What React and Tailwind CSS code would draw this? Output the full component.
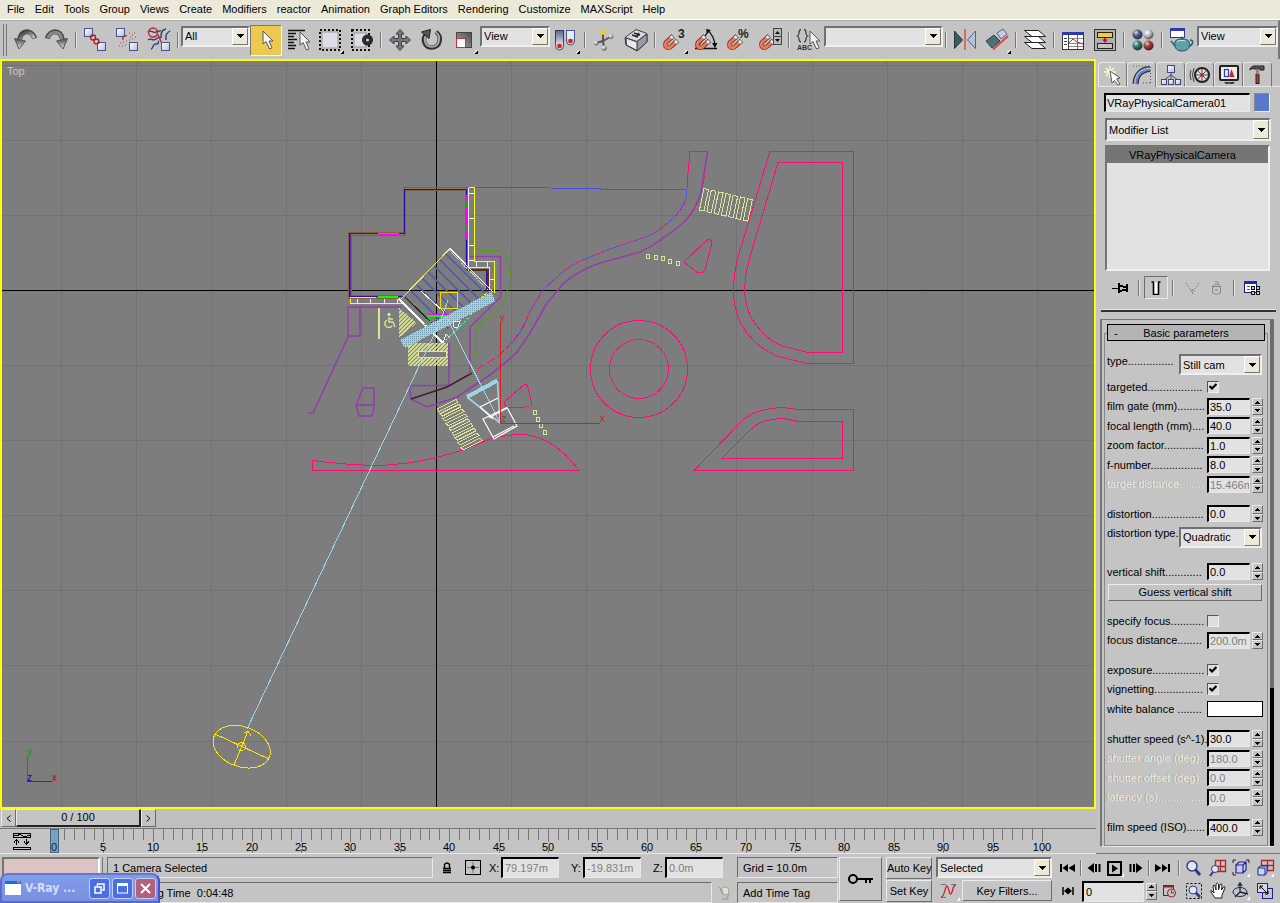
import React from "react";

const SUNK = "border border-t-[#6c6c6c] border-l-[#6c6c6c] border-r-[#e8e8e8] border-b-[#e8e8e8]";
const RAISED = "border border-t-[#ebebeb] border-l-[#ebebeb] border-r-[#6c6c6c] border-b-[#6c6c6c]";
const FIELD = "border-t-2 border-l-2 border-r border-b border-t-black border-l-black border-r-[#e8e8e8] border-b-[#e8e8e8] bg-[#e2e2e2]";

function Select({ label, id, options, className }) {
  return (
    <span className={`relative block ${className}`}>
      <select
        id={id}
        aria-label={label}
        className="block h-full w-full appearance-none border-2 border-t-[#6e7074] border-l-[#6e7074] border-r-[#efefef] border-b-[#efefef] bg-[#e2e2e2] pr-4 pl-[2px] text-black outline-none"
      >
        {options.map((o) => (
          <option key={o}>{o}</option>
        ))}
      </select>
      <span className="pointer-events-none absolute top-[2px] right-[2px] bottom-[2px] flex w-4 items-center justify-center border border-t-white border-l-white border-r-[#77756a] border-b-[#77756a] bg-[#ece9d8]">
        <svg width="7" height="4" viewBox="0 0 7 4" shapeRendering="crispEdges">
          <path d="M0 0H7L3.5 4Z" fill="#000" />
        </svg>
      </span>
    </span>
  );
}

function Sep() {
  return (
    <span className="flex h-4 w-[6px] shrink-0 justify-center">
      <span className="w-px bg-[#777]" />
      <span className="w-px bg-[#e4e4e4]" />
    </span>
  );
}

function Tool({ label, active, flyout, children }) {
  return (
    <button
      aria-label={label}
      className={`relative flex h-[31px] w-8 shrink-0 items-center justify-center ${active ? "border border-t-[#777] border-l-[#777] border-r-white border-b-white bg-[#edc952]" : ""}`}
    >
      <svg className="overflow-visible" width="24" height="24" viewBox="0 0 24 24" fill="none">
        {children}
      </svg>
      {flyout && (
        <svg className="absolute right-[2px] bottom-[2px]" width="4" height="4" viewBox="0 0 4 4" shapeRendering="crispEdges">
          <path d="M4 0V4H0Z" fill="#000" />
          <path d="M0 3L3 0H2L0 2Z" fill="#fff" />
        </svg>
      )}
    </button>
  );
}

const Cube = ({ x, y, s = 8 }) => (
  <g>
    <rect x={x} y={y} width={s} height={s} fill="url(#cube)" stroke="#4a5590" />
  </g>
);

const Cursor = ({ x, y }) => (
  <path transform={`translate(${x} ${y})`} d="M0 0L0 13L3 10.5L6.5 18L9 16.8L6 10H10Z" fill="#f4f4f4" stroke="#555" />
);

const Magnet = () => (
  <g>
    <path d="M15 10L9 15.500C5 19 1.500 14 4.500 11L11 5" stroke="#8a3020" strokeWidth="4.600" transform="translate(0 3)" />
    <path d="M15 10L9 15.500C5 19 1.500 14 4.500 11L11 5" stroke="#e8785c" strokeWidth="3" transform="translate(0 3)" />
    <path d="M13.200 14.800L15.500 12.500M8.800 10.200L11 8" stroke="#555" strokeWidth="4.600" />
    <path d="M13.200 14.800L15 13M8.800 10.200L10.600 8.400" stroke="#eee" strokeWidth="3.200" />
  </g>
);

function Defs() {
  return (
    <svg width="0" height="0" className="absolute" aria-hidden="true">
      <defs>
        <linearGradient id="cube" x1="0" y1="0" x2="1" y2="1">
          <stop offset="0" stopColor="#fff" />
          <stop offset="1" stopColor="#b8bcd8" />
        </linearGradient>
        <linearGradient id="steel" x1="0" y1="0" x2="1" y2="1">
          <stop offset="0" stopColor="#333" />
          <stop offset="0.500" stopColor="#888" />
          <stop offset="1" stopColor="#ddd" />
        </linearGradient>
        <linearGradient id="steelBox" x1="0" y1="1" x2="1" y2="0">
          <stop offset="0" stopColor="#aaa" />
          <stop offset="1" stopColor="#4a4c54" />
        </linearGradient>
        <linearGradient id="steelDown" x1="0" y1="0" x2="0" y2="1">
          <stop offset="0" stopColor="#444" />
          <stop offset="0.400" stopColor="#888" />
          <stop offset="1" stopColor="#e8e8e8" />
        </linearGradient>
        <linearGradient id="pane" x1="0" y1="0" x2="0" y2="1">
          <stop offset="0" stopColor="#5a6690" />
          <stop offset="1" stopColor="#d8dcf0" />
        </linearGradient>
        <radialGradient id="ballBlue" cx="0.350" cy="0.300" r="0.700">
          <stop offset="0" stopColor="#dfe4f8" />
          <stop offset="0.400" stopColor="#5a688f" />
          <stop offset="1" stopColor="#222a44" />
        </radialGradient>
        <radialGradient id="ballGray" cx="0.350" cy="0.300" r="0.700">
          <stop offset="0" stopColor="#fff" />
          <stop offset="0.500" stopColor="#bbb" />
          <stop offset="1" stopColor="#555" />
        </radialGradient>
        <radialGradient id="ballTeal" cx="0.350" cy="0.300" r="0.700">
          <stop offset="0" stopColor="#cfeee8" />
          <stop offset="0.400" stopColor="#3d8076" />
          <stop offset="1" stopColor="#123a34" />
        </radialGradient>
        <radialGradient id="ballRed" cx="0.350" cy="0.300" r="0.700">
          <stop offset="0" stopColor="#f4c8c0" />
          <stop offset="0.400" stopColor="#a84840" />
          <stop offset="1" stopColor="#4c1814" />
        </radialGradient>
      </defs>
    </svg>
  );
}

const MENUS = ["File", "Edit", "Tools", "Group", "Views", "Create", "Modifiers", "reactor", "Animation", "Graph Editors", "Rendering", "Customize", "MAXScript", "Help"];

function MenuBar() {
  return (
    <nav className="flex h-5 shrink-0 items-center gap-[10px] border-b border-white bg-[#ece9d8] pb-[2px] pl-[7px] text-[11px]">
      {MENUS.map((m) => (
        <button key={m} className="whitespace-nowrap">
          {m}
        </button>
      ))}
    </nav>
  );
}

function Toolbar() {
  return (
    <div className="flex h-[39px] shrink-0 items-center overflow-hidden border-t border-t-[#aaa] border-r-2 border-r-[#777] bg-[#c4c4c4]">
      <span className="flex h-8 w-[9px] shrink-0 gap-[2px] pl-[3px]">
        <span className="w-px bg-[#777]" />
        <span className="w-px bg-[#777]" />
      </span>
      <Tool label="Undo">
        <path d="M21.500 10.500C20 2.500 8 0 6.500 12" stroke="#444" strokeWidth="5" />
        <path d="M21 10C19 3 8.500 1 7 12" stroke="url(#steel)" strokeWidth="3.200" />
        <path d="M1.500 10.500L12.500 13L6 21Z" fill="url(#steelDown)" stroke="#555" />
      </Tool>
      <Tool label="Redo">
        <path d="M2.500 10.500C4 2.500 16 0 17.500 12" stroke="#444" strokeWidth="5" />
        <path d="M3 10C5 3 15.500 1 17 12" stroke="#888" strokeWidth="3.200" />
        <path d="M22.500 10.500L11.500 13L18 21Z" fill="url(#steelDown)" stroke="#555" />
      </Tool>
      <Sep />
      <Tool label="Select and link">
        <Cube x={1.500} y={0.500} />
        <Cube x={14.500} y={14.500} />
        <circle cx="10" cy="9.500" r="2.500" stroke="#b02020" strokeWidth="1.300" />
        <circle cx="13.500" cy="13.500" r="2.500" stroke="#b02020" strokeWidth="1.300" />
      </Tool>
      <Tool label="Unlink selection">
        <Cube x={1.500} y={0.500} />
        <Cube x={14.500} y={14.500} />
        <path d="M8 12C7 9 9 7 12 8" stroke="#b02020" strokeWidth="1.300" />
        <path d="M14 5h1M17 7h1M15 9h1M19 5h1M20 9h1M17 11h1M14 12h1M5 15h1M8 14h1M10 17h1M7 18h1M4 18h1M11 13h1" stroke="#c04040" strokeWidth="1.200" />
      </Tool>
      <Tool label="Bind to space warp">
        <path d="M1 4c3-3 5 2 8 0s5 0 4-2M1 12c3-3 5 2 8-1s3 0 5-2M4 21c2 0 2-6 5-5s2-3 3-3M14 10c0-4 0-8 5-9M19 12c0-4-1-6 4-9" stroke="#333a70" strokeWidth="1.400" />
        <circle cx="6" cy="4.500" r="4.500" stroke="#c02828" strokeWidth="1.400" />
        <path d="M10 6c3 3 3 5 4 8" stroke="#c02828" strokeWidth="1.400" />
        <Cube x={14.500} y={14.500} />
      </Tool>
      <Sep />
      <Select label="Selection filter" options={["All"]} className="mb-2 h-[21px] w-[69px] shrink-0" />
      <Tool label="Select object" active>
        <Cursor x={9} y={3} />
      </Tool>
      <Tool label="Select by name">
        <path d="M2 2.500H19M2 5.500H10M2 8.500H8M2 11.500H11M2 14.500H8M2 17.500H10M2 20.500H9" stroke="#111" strokeWidth="1.500" />
        <Cursor x={14} y={4} />
      </Tool>
      <Tool label="Rectangular region" flyout>
        <rect x="2" y="2" width="20" height="20" stroke="#111" strokeWidth="2" strokeDasharray="2 2" />
        <rect x="4" y="4" width="16" height="16" fill="#dcdde6" stroke="#999" />
      </Tool>
      <Tool label="Window crossing">
        <rect x="2" y="2" width="17" height="20" stroke="#111" strokeWidth="2" strokeDasharray="2 2" />
        <rect x="4" y="5" width="12" height="14" fill="#dcdde6" stroke="#999" />
        <circle cx="17.500" cy="12" r="5.500" fill="#2a2a2a" />
        <circle cx="17.500" cy="12" r="1.500" fill="#ccc" />
      </Tool>
      <Sep />
      <Tool label="Select and move">
        <path d="M12 1.500L16 6H13.500V10.500H18V8L22.500 12L18 16V13.500H13.500V18H16L12 22.500L8 18H10.500V13.500H6V16L1.500 12L6 8V10.500H10.500V6H8Z" fill="#777" stroke="#3c3f48" />
      </Tool>
      <Tool label="Select and rotate">
        <path d="M16 4C22 8 21 19 12 19.500C4 19.500 2 11 6 6.500" stroke="#333" strokeWidth="4.500" />
        <path d="M16 4.500C21 8 20 18.500 12 18.800C5 18.800 3 11 6.500 7" stroke="#aaa" strokeWidth="2" />
        <path d="M1.500 4L10.500 1.500L9 10.500Z" fill="#555" stroke="#222" />
      </Tool>
      <Tool label="Select and scale" flyout>
        <rect x="4.500" y="4.500" width="15" height="15" fill="url(#steelBox)" stroke="#444" />
        <rect x="4.500" y="10.500" width="9" height="9" fill="#fff" stroke="#d03030" />
      </Tool>
      <Select label="Reference coordinate system" options={["View"]} className="mb-2 h-[21px] w-[70px] shrink-0" />
      <Tool label="Use pivot point center" flyout>
        <rect x="1.500" y="2.500" width="8" height="14" fill="url(#pane)" stroke="#333a60" />
        <path d="M1.500 15v3a4 4 0 0 0 8 0v-3" fill="#c8cce0" stroke="#555" />
        <rect x="12.500" y="2.500" width="8" height="9" fill="#e8eaf8" stroke="#4a58a0" />
        <path d="M12.500 11v2a4 4 0 0 0 8 0v-2" fill="#c8cce0" stroke="#555" />
        <circle cx="5.500" cy="18" r="2.300" fill="#d82020" />
        <circle cx="16.500" cy="13" r="2.300" fill="#d82020" />
      </Tool>
      <Sep />
      <Tool label="Select and manipulate">
        <path d="M11 4V13L4 15M11 13L20 8M11 13L12 20" stroke="#555" strokeWidth="2" />
        <circle cx="11" cy="4" r="2.800" fill="#e8d030" />
        <circle cx="4" cy="15" r="2.400" fill="url(#ballGray)" />
        <circle cx="19" cy="8.500" r="2.400" fill="url(#ballGray)" />
        <circle cx="12" cy="20" r="2.600" fill="url(#ballGray)" />
      </Tool>
      <Tool label="Keyboard shortcut override">
        <path d="M1 10L12 2L23 6V14L13 23L2 17Z" fill="#666" stroke="#333" />
        <path d="M1 9.500L12 1.500L23 5.500L13 13.500Z" fill="#d8d8e4" stroke="#444" />
        <path d="M13 13.500L23 6V14L13 23Z" fill="#999aa8" stroke="#444" />
        <path d="M2 10L13 14V22.500L2.500 17Z" fill="#e8e8f0" stroke="#444" />
        <path d="M8 7L14 9M10 5L16 7M12 9L15 5" stroke="#222" strokeWidth="1.500" />
      </Tool>
      <Sep />
      <Tool label="Snaps toggle" flyout>
        <Magnet />
        <text x="16" y="10" fontSize="12" fontWeight="bold" fill="#222" fontFamily="Liberation Sans, sans-serif">3</text>
      </Tool>
      <Tool label="Angle snap">
        <path d="M1 20.500H23M3 20L15 2M13 2C18 5 21 12 21 19" stroke="#111" strokeWidth="1.300" />
        <path d="M12 1L17 2L13 6ZM18 15H23.500L21 20Z" fill="#111" />
        <Magnet />
      </Tool>
      <Tool label="Percent snap">
        <Magnet />
        <text x="12" y="10" fontSize="12" fontWeight="bold" fill="#222" fontFamily="Liberation Sans, sans-serif">%</text>
      </Tool>
      <Tool label="Spinner snap">
        <Magnet />
        <rect x="15.500" y="0.500" width="8" height="8" fill="#b8b8b8" stroke="#444" />
        <rect x="15.500" y="8.500" width="8" height="8" fill="#b8b8b8" stroke="#444" />
        <path d="M17 6H22L19.500 3ZM17 11H22L19.500 14Z" fill="#111" />
      </Tool>
      <Sep />
      <Tool label="Named selection sets">
        <path d="M5 1.500C2 1.500 4 7 1.500 8C4 9 2 14 5 14M8 1.500C11 1.500 9 7 11.500 8C9 9 11 14 8 14" stroke="#444" strokeWidth="1.300" />
        <text x="1" y="22" fontSize="7" fontWeight="bold" fill="#333" fontFamily="Liberation Sans, sans-serif">ABC</text>
        <Cursor x={14} y={3} />
      </Tool>
      <Select label="Named selection" options={[""]} className="mb-2 h-[21px] w-[119px] shrink-0" />
      <Sep />
      <Tool label="Mirror">
        <path d="M1.500 3L9.500 12L1.500 20.500Z" fill="#3c5c64" stroke="#24383c" />
        <path d="M22.500 3L14.500 12L22.500 20.500Z" fill="#b8c0dc" stroke="#5a6080" />
        <path d="M12 1V22" stroke="#e04848" strokeWidth="1.400" />
      </Tool>
      <Tool label="Align" flyout>
        <path d="M1 13L9 7L15 13L7 20Z" fill="#4c7078" stroke="#2a4046" />
        <path d="M12 5L18 1L22 6L16 11Z" fill="#c4cce8" stroke="#5a6080" />
        <path d="M8 21.500L23 8" stroke="#e04040" strokeWidth="1.800" />
      </Tool>
      <Sep />
      <Tool label="Layer manager">
        <path d="M1.500 14.500H15.500L22.500 20.500H9Z" fill="#fff" stroke="#222" />
        <path d="M1.500 8.500H15.500L22.500 14.500H9Z" fill="#fff" stroke="#222" />
        <path d="M1.500 2.500H15.500L22.500 8.500H9Z" fill="#fff" stroke="#222" />
      </Tool>
      <Sep />
      <Tool label="Curve editor">
        <rect x="1.500" y="4.500" width="21" height="17" fill="#fff" stroke="#333" />
        <rect x="1" y="4" width="22" height="3" fill="#3038b0" />
        <path d="M7.500 7V21M3 10.500H6M3 13.500H6M3 16.500H6" stroke="#444" />
        <path d="M8 10.500H22M8 15.500H22M8 18.500H22" stroke="#888" />
        <path d="M8 15L12 11L16 14L22 16" stroke="#d02828" />
        <path d="M16.500 7V21" stroke="#28a028" />
      </Tool>
      <Tool label="Schematic view">
        <rect x="1.500" y="1.500" width="21" height="21" fill="#b0b0b0" stroke="#333" />
        <rect x="4.500" y="4.500" width="15" height="5" fill="#f0d030" stroke="#222" />
        <rect x="4.500" y="15.500" width="15" height="5" fill="#c4c4c4" stroke="#222" />
        <path d="M12 10V14" stroke="#c02020" strokeWidth="2" />
        <path d="M9 11.500H15L12 15Z" fill="#c02020" />
      </Tool>
      <Sep />
      <Tool label="Material editor">
        <circle cx="6.500" cy="6.500" r="5" fill="url(#ballBlue)" />
        <circle cx="17.500" cy="6.500" r="5" fill="url(#ballGray)" />
        <circle cx="6.500" cy="17.500" r="5" fill="url(#ballTeal)" />
        <circle cx="17.500" cy="17.500" r="5" fill="url(#ballRed)" />
      </Tool>
      <Sep />
      <Tool label="Render scene">
        <rect x="1.500" y="0.500" width="14" height="9" fill="#fff" stroke="#333a80" />
        <rect x="1" y="0" width="15" height="3" fill="#3038b0" />
        <path d="M2 13L7 19M21 12C26 12 23 18 20 18" stroke="#2c6068" strokeWidth="1.600" />
        <path d="M6 14C6 10 20 10 20 14C22 19 19 23 13 23C7 23 5 19 6 14Z" fill="#5fa0a8" stroke="#24545c" />
        <path d="M8 14C10 12 14 12 16 13" stroke="#cfeef0" />
        <circle cx="13" cy="10" r="1.500" fill="#2c6068" />
      </Tool>
      <Select label="Render type" options={["View"]} className="mb-2 h-[21px] min-w-20 flex-1 shrink-0" />
    </div>
  );
}

const V_LINES = [61, 136, 211, 286, 361, 511, 586, 661, 736, 812, 887, 962, 1037];
const H_LINES = [65, 140, 215, 365, 440, 515, 590, 665, 741];
const PINK = "#ff0a78";
const PURPLE = "#9140ab";
const LIME = "#dce596";
const SKY = "#9fd3ea";

function Scene() {
  return (
    <svg className="block h-full w-full" viewBox="2 61 1092 746" preserveAspectRatio="xMinYMin slice" fill="none" shapeRendering="crispEdges">
      <defs>
        <pattern id="dots" width="2" height="2" patternUnits="userSpaceOnUse">
          <rect width="2" height="2" fill="#9fd3ea" />
          <rect width="1" height="1" fill="#6f99aa" />
        </pattern>
        <pattern id="hatch" width="4" height="4" patternUnits="userSpaceOnUse">
          <path d="M0 4L4 0M-1 1L1 -1M3 5L5 3" stroke={LIME} strokeWidth="1.800" shapeRendering="auto" />
        </pattern>
        <pattern id="roof" width="12" height="12" patternUnits="userSpaceOnUse">
          <path d="M0 0L12 12M-1 11L1 13M11 -1L13 1" stroke="#4a5db8" strokeWidth="1.800" shapeRendering="auto" />
        </pattern>
      </defs>
      <g stroke="#727272">
        {V_LINES.map((x) => (
          <path key={x} d={`M${x}.5 61V807`} />
        ))}
        {H_LINES.map((y) => (
          <path key={y} d={`M2 ${y}.5H1094`} />
        ))}
        <path d="M2 118.500H922.500V807" stroke="#787878" />
      </g>
      <path d="M436.500 61V807M2 290.500H1094" stroke="#000" />

      <g stroke={PINK}>
        <path d="M770 151.500H853.500V363.500H807L777 356Q760 348 753 340Q742 328 738 317Q733.500 304 733.500 290Q734 272 738 257Z" />
        <path d="M778 162.500H842.500V352.500H808L782 346Q770 341 763 333Q752 322 748 310Q744.500 300 744.500 290Q745 275 749 260Z" />
        <path d="M694 470.500L743 420Q750 414 760 411Q772 407.500 783 407.500L798 409.500H853.500V470.500Z" />
        <path d="M721.500 458.500L748 432Q755 425 763 421.500Q773 418.500 783 418.500L798 421.500H842.500V458.500Z" />
        <circle cx="639" cy="369" r="48.500" />
        <circle cx="639" cy="369" r="29.500" />
        <path d="M312.500 470.500V460.500Q345 465 380 465.500Q408 464 430 459Q450 454 463 450L490 439Q505 435 523 434Q537 436 550 443Q566 453 579 470.500Z" />
        <path d="M684 262L706 241Q711 237 712 243L705 270Q700 276 694 270Z" />
        <path d="M505 401L524 385Q527 383 528 388L532 404Q531 408 508 408Q504 406 505 401Z" />
        <path d="M708 151.500H690L688 173L687 188" />
      </g>

      <path d="M474 187.500H501L598 188.500H600V189.500H687" stroke="#4a50e0" />
      <path d="M707.500 152L703 180Q702 192 697 203Q692 214 683 223Q673 232 663 238Q653 246 640 252L600 263Q588 267 580 272Q565 280 558 290L547 303L530 333L517 352Q503 366 487 377L457 397L427 407L411 399L409 385.500H449V343" stroke={PURPLE} strokeWidth="1.600" shapeRendering="auto" />
      <path d="M705.500 162Q704 190 697 203Q690 216 683 223" stroke={PINK} strokeDasharray="2 5" />
      <path d="M687 188Q687 198 684 203Q678 216 663 227Q653 235 643 238L610 249L580 261Q565 269 557 277L543 290L530 311Q524 330 512 343" stroke="#5558dd" />
      <path d="M685 203Q678 216 663 227Q653 235 643 238L610 249L580 261Q565 269 557 277L543 290L530 311" stroke={PINK} strokeDasharray="2 5" />
      <path d="M530 311Q522 335 497 357L472 372" stroke={PINK} strokeDasharray="9 3" />
      <path d="M472 373L447 387L411 399" stroke="#4a1a38" strokeWidth="1.600" shapeRendering="auto" />

      <g stroke={LIME}>
        {[0, 1, 2, 3, 4, 5, 6].map((i) => (
          <path key={i} d="M704 188.500L708.500 189.500L704 211L699.500 210Z" transform={`translate(${i * 7.3} ${i * 1.700})`} />
        ))}
        {[0, 1, 2, 3, 4, 5, 6, 7, 8].map((i) => (
          <path key={i} d="M437 409L456 399.500L458 402L439 411.500Z" transform={`translate(${i * 3} ${i * 4.800})`} />
        ))}
        {[[648, 256], [656, 257], [663, 258], [670, 261], [678, 263], [535, 412], [538, 419], [541, 425], [545, 432]].map(([x, y]) => (
          <rect key={`${x}-${y}`} x={x - 1.500} y={y - 1.500} width="3" height="4" />
        ))}
      </g>

      <g stroke={PURPLE} strokeWidth="1.600" shapeRendering="auto">
        <path d="M347 307H402M348 307V336H360V307M348 337L313 413H308" />
        <path d="M363 388H374V408L372 416H359L356 405ZM356 405H374" />
        <path d="M468 256.500H500.500V297L470 327V374" />
      </g>
      <path d="M362 405H368" stroke={PINK} />
      <path d="M476 189L473 210V237Q474 250 482 250.500H497Q507 252 509 262Q512 277 508 290Q505 306 495 313L485 320Q474 328 475 340V350L472 373" stroke="#559c14" />

      <path d="M379 308V339" stroke={LIME} strokeWidth="2" />
      <path d="M398.500 307.500V338L417 323Z" fill="url(#hatch)" />
      <rect x="408" y="343" width="40" height="23" fill="url(#hatch)" />
      <rect x="418.500" y="351.500" width="28" height="6" fill="#7d7d7d" stroke={LIME} />
      <g stroke={LIME} shapeRendering="auto" strokeWidth="1.400">
        <path d="M389 317V322H393L395 327M389 319H393" />
        <path d="M387 320A4 4 0 1 0 392 326" />
        <circle cx="389" cy="314.500" r="1" fill={LIME} />
      </g>

      <path d="M467.500 270V187.500H403.500V232.500H348.500V298.500H402" stroke="#8a6038" />
      <path d="M465.500 270V190.500H405.500V235.500H351.500V295.500H402" stroke="#8a6038" />
      <path d="M466.500 270V189.500H404.500V233.500H349.500V296.500H404" stroke="#2a0fa5" />
      <path d="M350.500 234V296" stroke="#5a2cb0" />
      <path d="M466.500 195V240M378 234.500H399" stroke="#f0f" strokeWidth="1" />
      <path d="M466.500 202V208M466.500 225V229" stroke="#0c0" />
      <path d="M378 296.500H398" stroke="#0f0" strokeWidth="2" />
      <path d="M378 233.500H399" stroke="#2c2" />
      <path d="M350 297.500H376M350.500 299V303.500H402" stroke="#ff0" />
      <path d="M357.500 299V303M370.500 299V303M384.500 299V303M397.500 299V303" stroke="#eee" />
      <path d="M468.500 187.500H474.500V261.500H494.500V293" stroke="#ff0" />
      <path d="M468.500 188V268" stroke="#eee" />
      <path d="M469 193.500H474M469 218.500H474M469 245.500H474M469 260.500H474M489 279.500H494M476.500 262V267M487.500 262V267" stroke="#eee" />
      <path d="M467 269.500H487.500V290" stroke="#5b3010" strokeWidth="2" />
      <path d="M469 267.500H489.500V290" stroke="#ff0" />
      <path d="M486.500 271V290" stroke="#2a0fa5" />

      <path d="M450 249L487 291L443 333L404 299Z" fill="url(#roof)" />
      <path d="M401 299L450 248.500" stroke="#f2e878" />
      <path d="M450 248.500L493 292" stroke="#fff" />
      <path d="M449 250L490 292" stroke="#ccc" strokeDasharray="2 1" />
      <path d="M405 297L437 328" stroke="#222" />
      <path d="M408 297L440 328" stroke="#2c2" strokeDasharray="5 4" />
      <path d="M399 299L443 343" stroke="#fff" strokeWidth="2" />
      <path d="M421 291L444 312" stroke="#fff" />
      <path d="M487 293L460 315" stroke="#ff0" strokeDasharray="3 2" />
      <path d="M427 314.500H455" stroke="#f0f" />
      <path d="M427 316H449" stroke="#0f0" strokeWidth="2" />
      <path d="M400 340L491.500 292L495 301.500L405 348Z" fill="url(#dots)" />
      <path d="M424 325L446 315" stroke="#2c2" strokeDasharray="3 3" />
      <path d="M470 317L443 343" stroke="#2cc89a" />
      <path d="M472 314L446 340" stroke="#f2d838" strokeDasharray="2 3" />
      <path d="M443 343L446 334L450 338M453 322L460 321L458 327L454 327Z" stroke="#eee" />
      <rect x="440.500" y="292.500" width="17" height="16" stroke="#ffd800" />

      <path d="M448 300L440 322L247 729" stroke={SKY} />
      <path d="M447 318L500 423" stroke={SKY} />
      <path d="M467 397L497.500 380.500" stroke={SKY} strokeWidth="4" />
      <path d="M467 397L500 423L497.500 381" stroke={SKY} strokeWidth="1.600" shapeRendering="auto" />
      <g stroke="#fff" strokeWidth="1.200" shapeRendering="auto">
        <path d="M480 407L498 398M480 407L493 419M489 418L507 408" />
        <path d="M483 419L507 407.500L517 426L494 439ZM493 437L514 426" />
      </g>
      <path d="M500.500 323V423.500H600" stroke="#dc1c1c" />

      <g stroke="#ffe600">
        <ellipse cx="241.700" cy="746.700" rx="29.500" ry="20" transform="rotate(20 241.700 746.700)" />
        <path d="M215 734L269 759M248 731L234 765M244 733L248 731L251 736" />
        <circle cx="241.500" cy="746.500" r="4" />
      </g>
      <path d="M27.500 756V781" stroke="#00a000" />
      <path d="M27 781.500H52" stroke="#c80000" />
      <g fontFamily="Liberation Sans, sans-serif" fontSize="10" shapeRendering="auto">
        <text x="7" y="75" fill="#c8c8c8" fontSize="11">Top</text>
        <text x="500" y="321" fill="#dc1c1c">y</text>
        <text x="600" y="422" fill="#dc1c1c">x</text>
        <text x="501" y="422" fill="#555">z</text>
        <text x="27" y="755" fill="#00a000">y</text>
        <text x="27" y="781" fill="#0000d0">z</text>
        <text x="52" y="781" fill="#c80000">x</text>
      </g>
    </svg>
  );
}

function TimeSlider() {
  return (
    <div className="flex h-[19px] shrink-0 items-stretch bg-[#bfbfbf] pr-px pb-px pl-px text-[11px]">
      <button aria-label="Previous frame" className={`flex w-[15px] items-center justify-center bg-[#c4c4c4] ${RAISED}`}>
        <svg width="5" height="7" viewBox="0 0 5 7" fill="none" stroke="#000"><path d="M4.500 0.500L1 3.500L4.500 6.500" /></svg>
      </button>
      <button className="w-[125px] border-t border-r-2 border-b-2 border-l border-t-[#ebebeb] border-r-[#222] border-b-[#222] border-l-[#ebebeb] bg-[#c4c4c4] leading-none">
        0 / 100
      </button>
      <button aria-label="Next frame" className={`flex w-[15px] items-center justify-center bg-[#c4c4c4] ${RAISED}`}>
        <svg width="5" height="7" viewBox="0 0 5 7" fill="none" stroke="#000"><path d="M0.500 0.500L4 3.500L0.500 6.500" /></svg>
      </button>
    </div>
  );
}

function TrackBar() {
  const ticks = Array.from({ length: 101 }, (_, i) => i);
  return (
    <div className="h-[26px] shrink-0 overflow-hidden border-t border-b border-t-[#777] border-b-[#e8e8e8] bg-[#c4c4c4]">
      <svg className="block h-6 w-full" viewBox="0 829 1096 24" preserveAspectRatio="xMinYMin slice" fill="none">
        <g shapeRendering="crispEdges" stroke="#000">
          <path d="M13.500 833.500H30.500V837.500H13.500ZM14 835.500H17L20 834.500L24 836.500L30 835.500M13.500 847.500H30.500V849.500H13.500Z" />
          <path d="M16.500 845V840M14 842.500L16.500 839.500L19 842.500M26.500 839V844M24 841.500L26.500 844.500L29 841.500" />
          {ticks.map((i) => {
            const x = Math.round(54 + i * 9.880) + 0.5;
            return <path key={i} stroke="#777" d={i % 5 ? `M${x} 829V840` : `M${x} 829V842M${x} 850V853`} />;
          })}
        </g>
        <rect x="50.500" y="829.500" width="8" height="23" fill="#6f9dc2" fillOpacity="0.850" stroke="#44617c" />
        <g fontFamily="Liberation Sans, sans-serif" fontSize="11" fill="#000" textAnchor="middle">
          {ticks.filter((i) => i % 5 === 0).map((i) => (
            <text key={i} x={Math.round(54 + i * 9.880)} y="851" fill={i ? "#000" : "#123"}>{i}</text>
          ))}
        </g>
      </svg>
    </div>
  );
}

const TABS = [
  ["Create", <g key="a"><path d="M8 2V14M2 8H14M4 4L12 12M12 4L4 12" stroke="#fffbd0" strokeWidth="1.300" /><path d="M8 7L18 14L14.500 15L18 20L16 21L12.500 16.500L10 19Z" fill="#fff" stroke="#555" /></g>],
  ["Modify", <g key="b"><path d="M4.500 20C5 11 10 5.500 19 5" stroke="#1c2440" strokeWidth="6" /><path d="M4.500 20C5 11 10 5.500 19 5" stroke="#6c7cae" strokeWidth="4" /><path d="M3.800 20C4.300 10.500 9.500 4.700 19 4.300" stroke="#c4ccea" strokeWidth="1" /><path d="M2 2H19M19.500 3V20M12 19H19" stroke="#555" strokeDasharray="1 2" /></g>],
  ["Hierarchy", <g key="c"><path d="M11 8V15M4 16L11 11L18 16" stroke="#444a70" /><rect x="7.500" y="1.500" width="7" height="7" fill="url(#cube)" stroke="#444a80" /><rect x="1.500" y="15.500" width="5" height="5" fill="url(#cube)" stroke="#444a80" /><rect x="8.500" y="15.500" width="5" height="5" fill="url(#cube)" stroke="#444a80" /><rect x="15.500" y="15.500" width="5" height="5" fill="url(#cube)" stroke="#444a80" /></g>],
  ["Motion", <g key="d"><path d="M2 6Q0 11 2 16M5 4Q2 11 5 18" stroke="#444" /><circle cx="13" cy="11" r="7" fill="#ddd" stroke="#222" strokeWidth="2" /><path d="M13 5V17M7 11H19M9 7L17 15M17 7L9 15" stroke="#555" /><circle cx="13" cy="11" r="1.800" fill="#d02020" /></g>],
  ["Display", <g key="e"><rect x="2" y="2" width="18" height="14" rx="1" fill="#eee" stroke="#222" strokeWidth="2" /><rect x="6.500" y="5.500" width="4" height="7" stroke="#3040b0" strokeWidth="1.200" /><path d="M11 13L13.500 5L16.500 13Z" fill="#d02828" /><path d="M6 18H17L15 20H8Z" fill="#333" /><path d="M9 19H13" stroke="#28a028" /></g>],
  ["Utilities", <g key="f"><path d="M3 5C5 1 8 2 13 2H17V6H13V5H8L5 4.500L3 6Z" fill="#555" stroke="#222" /><path d="M10.500 5V11" stroke="#888" strokeWidth="3" /><path d="M10.500 10V20" stroke="#222" strokeWidth="4" /><path d="M10.500 10V19" stroke="#b03828" strokeWidth="2" /></g>],
];

function Spinner({ label }) {
  return (
    <span className="flex h-[17px] w-[11px] shrink-0 flex-col">
      <button aria-label={`${label} up`} className={`flex flex-1 items-center justify-center ${RAISED}`}>
        <svg width="5" height="3" viewBox="0 0 5 3" shapeRendering="crispEdges"><path d="M0 3H5L2.500 0Z" /></svg>
      </button>
      <button aria-label={`${label} down`} className={`flex flex-1 items-center justify-center ${RAISED}`}>
        <svg width="5" height="3" viewBox="0 0 5 3" shapeRendering="crispEdges"><path d="M0 0H5L2.500 3Z" /></svg>
      </button>
    </span>
  );
}

function Param({ id, label, value, checked, options, disabled, color }) {
  return (
    <div className="flex items-center">
      <label
        htmlFor={id}
        className={`-ml-px shrink-0 whitespace-nowrap ${options ? "w-[72px]" : "w-[100px]"} ${disabled ? "text-[#efede2] [text-shadow:-1px_0_#a09f98]" : ""}`}
      >
        {label}
      </label>
      {options && <Select id={id} options={options} className="mt-2 h-[21px] w-[83px] shrink-0" />}
      {checked !== undefined && (
        <span className="relative block h-3 w-3">
          <input id={id} type="checkbox" defaultChecked={checked} className="peer block h-3 w-3 appearance-none border border-t-[#555] border-l-[#555] border-r-[#eee] border-b-[#eee] bg-[#dedede]" />
          <svg className="pointer-events-none absolute top-[2px] left-[2px] hidden peer-checked:block" width="8" height="8" viewBox="0 0 8 8" fill="none">
            <path d="M0.500 3L3 5.500L7.500 1" stroke="#000" strokeWidth="2.200" />
          </svg>
        </span>
      )}
      {color && <input id={id} type="text" readOnly className="h-4 w-14 border border-black bg-white" />}
      {value && (
        <>
          <input id={id} defaultValue={value} className={`mr-[2px] h-[17px] w-[43px] rounded-none pl-px outline-none ${FIELD} ${disabled || value === "200.0m" ? "text-[#808080]" : "text-black"}`} />
          <Spinner label={id} />
        </>
      )}
    </div>
  );
}

function CommandPanel() {
  return (
    <aside className="flex w-[184px] shrink-0 flex-col border-b border-b-[#777] bg-[#c4c4c4] pt-[3px] text-[11px]">
      <div className="flex h-[25px] shrink-0 pl-[2px]">
        {TABS.map(([name, art], i) => (
          <button
            key={name}
            aria-label={name}
            className={`flex w-[29px] items-center justify-center rounded-t border-t border-r border-l border-t-[#e8e8e8] border-l-[#e8e8e8] border-r-[#777] ${i === 1 ? "" : "border-b border-b-[#e8e8e8]"}`}
          >
            <svg width="22" height="22" viewBox="0 0 22 22" fill="none">{art}</svg>
          </button>
        ))}
        <span className="flex-1 border-b border-b-[#e8e8e8]" />
      </div>
      <div className="mt-[6px] mr-[10px] ml-2 flex h-[19px] shrink-0 gap-1">
        <input aria-label="Object name" defaultValue="VRayPhysicalCamera01" className={`min-w-0 flex-1 rounded-none pl-px outline-none ${FIELD}`} />
        <button aria-label="Object color" className="w-4 border border-t-[#888] border-l-[#888] border-r-[#eee] border-b-[#eee] bg-[#5878cc]" />
      </div>
      <Select label="Modifier List" options={["Modifier List"]} className="mt-[6px] mr-[9px] ml-[9px] h-[23px] shrink-0" />
      <ul className="mt-[4px] mr-[10px] ml-[9px] h-[126px] shrink-0 border-2 border-t-[#77756a] border-l-[#77756a] border-r-[#f4f2e8] border-b-[#f4f2e8] bg-[#e2e2e2]">
        <li className="h-4 bg-[#757575] pl-[22px] leading-4">VRayPhysicalCamera</li>
      </ul>
      <div className="mt-[5px] flex h-[23px] shrink-0 items-center pl-3">
        <button aria-label="Pin stack" className="flex w-[28px] pl-1">
          <svg width="17" height="12" viewBox="0 0 17 12" fill="none" shapeRendering="crispEdges" stroke="#000">
            <path d="M0 6H6" />
            <path d="M7 1V11" strokeWidth="2" />
            <path d="M8 3.500H10L11 4.500H14M8 8.500H10L11 7.500H14" strokeWidth="2" />
            <path d="M15 2V10" strokeWidth="2" />
          </svg>
        </button>
        <Sep />
        <button aria-label="Show end result" className={`mx-[2px] flex h-[23px] w-6 items-center justify-center ${SUNK}`}>
          <svg width="10" height="14" viewBox="0 0 10 14"><path d="M2.500 1.500V13.500H7.500V1.500" fill="#fff" stroke="#000" strokeWidth="1.600" /><path d="M0.500 1H3M7 1H9.500" stroke="#000" strokeWidth="1.600" /></svg>
        </button>
        <Sep />
        <button aria-label="Make unique" className="ml-1 flex w-6 justify-center">
          <svg width="15" height="14" viewBox="0 0 15 14" fill="none" stroke="#888" strokeDasharray="2 1"><path d="M1 2L6 9M14 2L9 9M5 10H10M7.500 8V13" /></svg>
        </button>
        <button aria-label="Remove modifier" className="flex w-6 justify-center">
          <svg width="11" height="14" viewBox="0 0 11 14" fill="none" stroke="#888"><path d="M1.500 6V12Q5.500 15 9.500 12V6M1 5.500H10M2 5C3 3 8 3 9 5M4 1H7V3M4 9H7" /></svg>
        </button>
        <span className="w-[3px]" />
        <Sep />
        <button aria-label="Configure modifier sets" className="ml-[7px] flex">
          <svg width="16" height="14" viewBox="0 0 16 14" fill="none" shapeRendering="crispEdges"><rect x="0.500" y="0.500" width="12" height="11" fill="#fff" stroke="#111a80" /><path d="M0 1.500H13" stroke="#1830b0" strokeWidth="3" /><path d="M3 5.500H6M3 8.500H6" stroke="#555" /><rect x="7.500" y="5.500" width="3" height="3" fill="#ccc" stroke="#111" /><rect x="12.500" y="5.500" width="3" height="3" fill="#ccc" stroke="#111" /><rect x="7.500" y="10.500" width="3" height="3" fill="#ccc" stroke="#111" /><rect x="12.500" y="10.500" width="3" height="3" fill="#ccc" stroke="#111" /></svg>
        </button>
      </div>
      <div className="mt-[10px] mr-1 ml-[5px] h-[3px] shrink-0 border-t border-b-2 border-t-[#e8e8e8] border-b-[#333]" />
      <div className="mt-[7px] mr-[6px] mb-[6px] ml-1 flex min-h-0 flex-1 border-t border-b border-l-2 border-t-[#777] border-b-[#e8e8e8] border-l-[#777] pl-[2px]">
        <section className="relative flex min-w-0 flex-1 flex-col px-1 pt-[4px]">
          <span className="pointer-events-none absolute inset-x-0 top-[13px] bottom-0 border border-[#888]" />
          <button className="relative -mx-px flex h-[17px] shrink-0 items-center border border-black bg-[#b4b4b4]">
            <span className="absolute left-[6px]">-</span>
            <span className="flex-1">Basic parameters</span>
          </button>
          <div className="relative -mr-1 mt-[5px] flex shrink-0 flex-col gap-[10px]">
            <div className="-mb-[5px] grid h-[26px] items-start">
              <Param id="type" label="type..............." options={["Still cam"]} />
            </div>
            <div className="grid h-[117px] auto-rows-fr">
              <Param id="targeted" label="targeted.................." checked />
              <Param id="film-gate" label="film gate (mm)........." value="35.0" />
              <Param id="focal-length" label="focal length (mm)...." value="40.0" />
              <Param id="zoom-factor" label="zoom factor............." value="1.0" />
              <Param id="f-number" label="f-number................." value="8.0" />
              <Param id="target-distance" label="target distance........" value="15.466m" disabled />
            </div>
            <div className="mb-[9px] grid h-[39px] auto-rows-fr">
              <Param id="distortion" label="distortion................." value="0.0" />
              <Param id="distortion-type" label="distortion type." options={["Quadratic"]} />
            </div>
            <div className="grid h-[39px] auto-rows-fr">
              <Param id="vertical-shift" label="vertical shift............" value="0.0" />
              <button className={`mr-[6px] mt-[2px] leading-none ${RAISED}`}>Guess vertical shift</button>
            </div>
            <div className="grid h-[39px] auto-rows-fr">
              <Param id="specify-focus" label="specify focus..........." checked={false} />
              <Param id="focus-distance" label="focus distance........" value="200.0m" />
            </div>
            <div className="grid h-[59px] auto-rows-fr">
              <Param id="exposure" label="exposure................." checked />
              <Param id="vignetting" label="vignetting................" checked />
              <Param id="white-balance" label="white balance ........" color />
            </div>
            <div className="grid h-[78px] auto-rows-fr">
              <Param id="shutter-speed" label="shutter speed (s^-1)." value="30.0" />
              <Param id="shutter-angle" label="shutter angle (deg).." value="180.0" disabled />
              <Param id="shutter-offset" label="shutter offset (deg).." value="0.0" disabled />
              <Param id="latency" label="latency (s)..............." value="0.0" disabled />
            </div>
            <div className="grid h-5">
              <Param id="film-speed" label="film speed (ISO)......" value="400.0" />
            </div>
          </div>
        </section>
        <div className="ml-[2px] flex w-[4px] flex-col">
          <span className="flex-[7] bg-[#6c6c6c]" />
          <span className="flex-[3] bg-black" />
        </div>
      </div>
    </aside>
  );
}

function Coord({ axis, value }) {
  return (
    <div className="flex items-center">
      <label htmlFor={`coord-${axis}`} className="w-3 whitespace-nowrap">{axis}:</label>
      <input id={`coord-${axis}`} defaultValue={value} className={`h-[21px] w-[58px] rounded-none pl-[2px] text-[#808080] outline-none ${FIELD}`} />
    </div>
  );
}

function Small({ label, w = 24, h = 22, className = "", children }) {
  return (
    <button aria-label={label} className={`flex shrink-0 items-center justify-center ${className}`}>
      <svg width={w} height={h} viewBox={`0 0 ${w} ${h}`} fill="none">{children}</svg>
    </button>
  );
}

function StatusBar() {
  return (
    <footer className="relative flex h-[49px] shrink-0 overflow-hidden bg-[#c4c4c4] pt-[3px] pr-[3px] text-[11px]">
      <div className="mr-[4px] flex w-[103px] shrink-0 border-r border-r-[#777] pl-[2px]">
        <input aria-label="Listener" className="h-[22px] w-[98px] border-2 border-t-[#77756a] border-l-[#77756a] border-r-white border-b-white bg-[#dcc4c6]" />
      </div>
      <div className="flex min-w-0 flex-1 flex-col gap-1">
        <div className="flex h-[21px] shrink-0 items-center">
          <output className={`flex h-full min-w-0 flex-1 items-center pl-[5px] ${SUNK}`}>1 Camera Selected</output>
          <Small label="Selection lock" w={14} h={16} className="mx-[5px] w-[18px]">
            <path d="M4.500 8V4.500Q7 1.500 9.500 4.500V8" stroke="#000" strokeWidth="1.400" />
            <path d="M3 8.500H11M3 10.500H11M3 12.500H11" stroke="#000" strokeWidth="1.300" />
          </Small>
          <Small label="Absolute mode" w={16} h={16} className="mr-2 ml-1">
            <rect x="0.500" y="0.500" width="15" height="14" stroke="#000" />
            <path d="M8 2V13M2 7.500H14" stroke="#777" />
            <circle cx="8" cy="7.500" r="2" fill="#000" />
          </Small>
          <div className="flex gap-3">
            <Coord axis="X" value="79.197m" />
            <Coord axis="Y" value="-19.831m" />
            <Coord axis="Z" value="0.0m" />
          </div>
          <output className={`ml-[14px] flex h-full w-[101px] shrink-0 items-center pl-[5px] ${SUNK}`}>Grid = 10.0m</output>
        </div>
        <div className="flex h-[21px] shrink-0 items-center">
          <output className={`flex h-full min-w-0 flex-1 items-center whitespace-pre pl-[5px] ${SUNK}`}>Rendering Time  0:04:48</output>
          <Small label="Communication center" w={16} h={16} className="w-[25px]">
            <circle cx="8" cy="6" r="4" fill="#e2dfd4" stroke="#a8a69c" />
            <path d="M2 2L6 7M12 9L10 13M5 14H12M3 4L7 9" stroke="#98968c" />
          </Small>
          <button className={`h-full w-[101px] shrink-0 pl-[5px] text-left ${SUNK}`}>Add Time Tag</button>
        </div>
      </div>
      <button aria-label="Set keys" className={`ml-px flex h-[44px] w-[43px] shrink-0 items-center justify-center ${RAISED}`}>
        <svg width="26" height="12" viewBox="0 0 26 12" fill="none" stroke="#000" strokeWidth="2"><circle cx="5" cy="6" r="4" /><path d="M9 6H25M18 6V10M22 6V10" /></svg>
      </button>
      <div className="mx-1 flex w-[46px] shrink-0 flex-col gap-px">
        <button className={`h-[22px] whitespace-nowrap ${RAISED}`}>Auto Key</button>
        <button className={`h-[22px] ${RAISED}`}>Set Key</button>
      </div>
      <div className="flex w-[116px] shrink-0 flex-col gap-[2px]">
        <Select label="Key selection" options={["Selected"]} className="h-[21px]" />
        <div className="flex">
          <Small label="Default tangents" w={22} h={20} className="w-[26px]">
            <path d="M3 3.500H8M13 3.500H18M3 16.500H8" stroke="#6a74a0" />
            <path d="M3 16C7 16 7 4 9 5C11 6 11 14 13 13C15 12 14 4 18 4" stroke="#d02020" strokeWidth="1.300" />
            <path d="M19 20H22V16Z" fill="#fff" />
          </Small>
          <button className={`h-[21px] flex-1 ${RAISED}`}>Key Filters...</button>
        </div>
      </div>
      <div className="ml-[6px] flex w-[124px] shrink-0 flex-col gap-[1px]">
        <div className="flex h-[22px] items-center">
          <Small label="Go to start" w={16} h={10} className="w-5"><path d="M1 1V9" stroke="#000" strokeWidth="2" /><path d="M8 1V9L2.500 5ZM15 1V9L8.500 5Z" fill="#000" /></Small>
          <Sep />
          <Small label="Previous" w={14} h={10} className="w-5"><path d="M7 0V10L0.500 5Z" fill="#000" /><path d="M9 1V9M12.500 1V9" stroke="#000" strokeWidth="2" /></Small>
          <Small label="Play" w={18} h={17} className="mx-[2px]"><rect x="2" y="2" width="13" height="13" stroke="#000" strokeWidth="2" /><path d="M6 4.500V12.500L12 8.500Z" fill="#000" /><path d="M15 17H18V13Z" fill="#fff" /></Small>
          <Small label="Next" w={14} h={10} className="w-5"><path d="M7 0V10L13.500 5Z" fill="#000" /><path d="M1.500 1V9M5 1V9" stroke="#000" strokeWidth="2" /></Small>
          <Sep />
          <Small label="Go to end" w={16} h={10} className="w-5"><path d="M15 1V9" stroke="#000" strokeWidth="2" /><path d="M1 1V9L7.500 5ZM8 1V9L13.500 5Z" fill="#000" /></Small>
          <span className="flex-1" />
          <Sep />
        </div>
        <div className="flex h-[22px] items-center">
          <Small label="Key mode" w={12} h={8} className="w-5"><path d="M1 0V8M11 0V8" stroke="#000" strokeWidth="1.500" /><path d="M6 0.500V7.500L2 4ZM6 0.500V7.500L10 4Z" fill="#000" /></Small>
          <input aria-label="Current frame" defaultValue="0" className={`mr-[2px] ml-[4px] h-[21px] w-[62px] rounded-none pl-[2px] outline-none ${FIELD}`} />
          <Spinner label="Current frame" />
          <Small label="Time configuration" w={14} h={14} className="w-6"><rect x="1.500" y="1.500" width="10" height="10" stroke="#333" /><path d="M1 2.500H12" stroke="#902020" strokeWidth="2" /><circle cx="9.500" cy="9" r="4" fill="#c4c4c4" stroke="#902020" /><path d="M9.500 6.500V9H12" stroke="#902020" /></Small>
        </div>
      </div>
      <div className="grid w-[95px] shrink-0 grid-cols-4 grid-rows-[22px_22px] gap-y-px">
        <Small label="Zoom" w={20} h={20}>
          <path d="M10 10L16 17" stroke="#2a3a80" strokeWidth="3" />
          <circle cx="8" cy="8" r="5" fill="#dfe8f4" stroke="#333a80" strokeWidth="1.400" />
        </Small>
        <Small label="Zoom all" w={20} h={20}>
          <path d="M7.500 2.500H17.500V13.500H7.500ZM12.500 2V14M7 8.500H18" stroke="#b02828" strokeWidth="1.300" />
          <circle cx="7" cy="11" r="3.500" fill="#dfe8f4" stroke="#333a80" /><path d="M5 14L2 18" stroke="#2a3a80" strokeWidth="2" />
        </Small>
        <Small label="Zoom extents" w={20} h={20}>
          <path d="M5 7L8 4H15V12L12 15H5ZM5 7H12V15M12 7L15 4" fill="#c8ccec" stroke="#1c2490" strokeWidth="1.200" />
          <path d="M2 5V2H5M15 2H18V5M2 14V17H5" stroke="#222" /><path d="M16 19H19V15Z" fill="#fff" />
        </Small>
        <Small label="Zoom extents all" w={20} h={20}>
          <path d="M6.500 2.500H18.500V12.500H6.500ZM12.500 2V12M7 7.500H18" stroke="#b02828" strokeWidth="1.300" />
          <path d="M3 10L5 8H12V14L10 17H3ZM3 10H10V17" fill="#d0d4f0" stroke="#1c2490" /><path d="M16 19H19V15Z" fill="#fff" />
        </Small>
        <Small label="Region zoom" w={20} h={20}>
          <rect x="2.500" y="2.500" width="15" height="15" stroke="#000" strokeDasharray="2 2" />
          <circle cx="9" cy="9" r="4" fill="#dfe8f4" stroke="#333a80" /><path d="M12 12L16 16" stroke="#2a3a80" strokeWidth="2.500" />
        </Small>
        <Small label="Pan" w={20} h={20}>
          <path d="M7 17L3 11Q2 9 4 10L6 12L5 5Q6 3 7 5L8 9V3Q9.500 1 10.500 3V9L12 3.500Q13.500 2 14 4L13.500 9L15.500 6Q17.500 5 17 7L14 14V17Z" fill="#fff" stroke="#222" />
        </Small>
        <Small label="Orbit" w={20} h={20}>
          <ellipse cx="9" cy="11" rx="7" ry="4.500" stroke="#1c2440" /><path d="M9 11V2M7 5L9 2L11 5M9 11L4 16M9 11L17 13" stroke="#1c2440" strokeWidth="1.300" /><path d="M16 19H19V15Z" fill="#fff" />
        </Small>
        <Small label="Maximize viewport" w={20} h={20}>
          <rect x="7.500" y="7.500" width="10" height="10" stroke="#1c2490" /><rect x="2.500" y="2.500" width="10" height="9" fill="#d8d8d8" stroke="#1c2490" /><path d="M5 5L13 13M5 8V5H8M13 10V13H10" stroke="#000" />
        </Small>
      </div>
    </footer>
  );
}

function MinimizedWindow() {
  const btn = "flex h-[21px] w-[21px] items-center justify-center rounded-[3px] border border-[#c3cff5]";
  return (
    <div className="absolute bottom-0 left-0 flex h-[30px] w-[160px] items-center gap-[2px] rounded-t-lg border-2 border-t-[#6377cf] border-r-[#4a4fc4] border-b-[#5a68cc] border-l-[#5a6cd0] bg-gradient-to-b from-[#7f9cea] to-[#7b90e0] pl-[3px]">
      <svg width="16" height="14" viewBox="0 0 16 14"><rect width="16" height="14" fill="#fff" /><rect width="16" height="3" fill="#1a6fe0" /><rect x="12" y="0" width="3" height="2" fill="#e87040" /></svg>
      <span className="min-w-0 flex-1 whitespace-pre pl-[2px] font-['DejaVu_Sans_Condensed','DejaVu_Sans','Liberation_Sans',sans-serif] text-[12px] font-bold text-[#d5defa]">V-Ray ...</span>
      <button aria-label="Restore" className={`${btn} bg-[#4a6fe4]`}>
        <svg width="11" height="11" viewBox="0 0 11 11" fill="none" stroke="#fff"><path d="M3.500 3V1H10V7H8" strokeWidth="1.500" /><rect x="1" y="4" width="6" height="6" strokeWidth="1.500" /></svg>
      </button>
      <button aria-label="Maximize" className={`${btn} bg-[#4a6fe4]`}>
        <svg width="11" height="11" viewBox="0 0 11 11" fill="none" stroke="#fff"><rect x="0.500" y="1" width="10" height="9" /><path d="M0 1.500H11" strokeWidth="3" /></svg>
      </button>
      <button aria-label="Close" className={`${btn} mr-[2px] bg-[#b4607c]`}>
        <svg width="11" height="11" viewBox="0 0 11 11" stroke="#fff" strokeWidth="2"><path d="M1 1L10 10M10 1L1 10" /></svg>
      </button>
    </div>
  );
}

export default function App() {
  return (
    <div className="relative flex h-screen flex-col overflow-hidden bg-[#c4c4c4] font-['Liberation_Sans',Arial,sans-serif] text-[11px] leading-[14px] text-black">
      <Defs />
      <MenuBar />
      <Toolbar />
      <main className="flex min-h-0 flex-1">
        <div className="flex min-w-0 flex-1 flex-col">
          <div className="min-h-0 flex-1 border-2 border-[#ff0] bg-[#7d7d7d]">
            <Scene />
          </div>
          <TimeSlider />
          <TrackBar />
        </div>
        <CommandPanel />
      </main>
      <StatusBar />
      <MinimizedWindow />
    </div>
  );
}
